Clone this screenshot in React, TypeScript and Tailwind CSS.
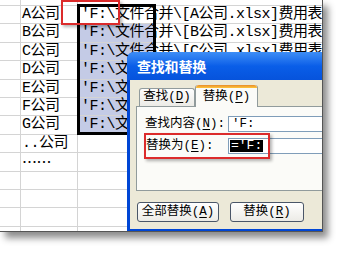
import React from 'react';

const mono = "font-['Liberation_Mono','Noto_Sans_CJK_SC',monospace]";
const cjk = "font-['Noto_Sans_CJK_SC',sans-serif]";

const path = (c: string) => `'F:\\文件合并\\[${c}公司.xlsx]费用表`;

const rows: { a?: string; b?: string; sel?: boolean; active?: boolean }[] = [
  { a: 'A公司', b: path('A'), sel: true, active: true },
  { a: 'B公司', b: path('B'), sel: true },
  { a: 'C公司', b: path('C'), sel: true },
  { a: 'D公司', b: path('D'), sel: true },
  { a: 'E公司', b: path('E'), sel: true },
  { a: 'F公司', b: path('F'), sel: true },
  { a: 'G公司', b: path('G'), sel: true },
  { a: '..公司' },
  { a: '……' },
  {},
  {},
  {},
  {},
];

const Key = ({ k }: { k: string }) => (
  <>
    (<span className="underline underline-offset-2">{k}</span>)
  </>
);

export default function App() {
  return (
    <div className="w-[343px] h-[253px] bg-white overflow-hidden">
      <div
        className={`relative w-[323px] h-[232px] overflow-hidden bg-white border-b border-r border-[#555] shadow-[5px_6px_7px_rgba(0,0,0,0.45)] ${mono} text-[15px] tracking-[-0.5px] text-black`}
      >
        {/* grid */}
        <div className="flex flex-col">
          <div className="flex h-[6px] border-b border-[#d4d4d4]">
            <div className="w-[21px] border-r border-[#d4d4d4]" />
            <div className="w-[57px] border-r border-[#d4d4d4]" />
            <div className="w-[77px]" />
          </div>
          {rows.map((r, i) => (
            <div key={i} className="flex h-[18.4px] shrink-0 border-b border-[#d4d4d4]">
              <div className="w-[21px] shrink-0 border-r border-[#d4d4d4]" />
              <div className="w-[57px] shrink-0 border-r border-[#d4d4d4] pl-[1px] leading-[18px] whitespace-nowrap">
                {r.a === '……' ? <span className={cjk}>{r.a}</span> : r.a}
              </div>
              <div
                className={`w-[77px] shrink-0 border-r border-[#d4d4d4] pl-[3px] leading-[18px] whitespace-nowrap overflow-visible ${
                  r.sel && !r.active ? 'bg-[#c4cbe6]' : ''
                }`}
              >
                {r.b}
              </div>
              <div className="flex-1" />
            </div>
          ))}
        </div>

        {/* selection outline */}
        <div className="absolute left-[77px] top-[4px] w-[79px] h-[131px] border-[3px] border-black" />

        {/* red mark over the first cell */}
        <div className="absolute left-[61px] top-[0px] w-[59px] h-[25px] border-2 border-[#dc2b2b] shadow-[2px_2px_3px_rgba(0,0,0,0.3)]" />

        {/* dialog */}
        <div className="absolute left-[127px] top-[52px] w-[240px] h-[180px] flex flex-col rounded-t-[7px] overflow-hidden bg-[#0046d5]">
          <div
            className={`h-[28px] shrink-0 flex items-center pl-[10px] bg-gradient-to-b from-[#3d8ef6] via-[#0a5ee8] to-[#0653dc] text-white font-bold text-[14px] tracking-[-0.2px] ${cjk}`}
          >
            查找和替换
          </div>
          <div className="flex-1 mx-[3px] mb-[3px] bg-[#ece9d8] flex flex-col text-[12.5px] tracking-normal">
            <div className="flex items-end h-[26px] pt-[4px] pl-[9px]">
              <div className="w-[56px] h-[18px] border border-b-0 border-[#919b9c] rounded-t-[3px] bg-gradient-to-b from-[#fefefe] to-[#ecebe6] flex items-center justify-center leading-none">
                查找<Key k="D" />
              </div>
              <div className="relative z-10 w-[63px] h-[22px] -mb-px border-x border-[#919b9c] rounded-t-[3px] bg-[#fbfbf8] flex flex-col">
                <div className="h-[3px] rounded-t-[3px] bg-gradient-to-b from-[#e68b2c] to-[#ffc73c]" />
                <div className="flex-1 flex items-center justify-center leading-none">
                  替换<Key k="P" />
                </div>
              </div>
            </div>
            <div className="ml-[6px] h-[85px] border border-[#919b9c] bg-[#fbfbf8] flex flex-col gap-[6px] pt-[9px]">
              <div className="flex items-center h-[16px]">
                <div className="w-[91px] pl-[8px] whitespace-nowrap">
                  查找内容<Key k="N" />:
                </div>
                <div className="flex-1 h-[16px] border border-[#7f9db9] bg-white pl-[3px] leading-[14px]">'F:</div>
              </div>
              <div className="flex items-center h-[16px]">
                <div className="w-[91px] pl-[9px] whitespace-nowrap">
                  替换为<Key k="E" />:
                </div>
                <div className="flex-1 h-[16px] border border-[#7f9db9] bg-white pl-[1px] flex items-center">
                  <span className="bg-black text-white text-[13px] leading-[12px] px-[1px]">='F:</span>
                </div>
              </div>
            </div>
            <div className="flex gap-[11px] mt-[11px] ml-[7px]">
              <div className="w-[82px] h-[20px] rounded-[3px] border border-[#4a5668] bg-gradient-to-b from-[#ffffff] to-[#ecebe6] flex items-center justify-center leading-none">
                全部替换<Key k="A" />
              </div>
              <div className="w-[74px] h-[20px] rounded-[3px] border border-[#4a5668] bg-gradient-to-b from-[#ffffff] to-[#ecebe6] flex items-center justify-center leading-none">
                替换<Key k="R" />
              </div>
            </div>
          </div>
        </div>

        {/* red mark over the replace field */}
        <div className="absolute left-[144px] top-[133px] w-[126px] h-[26px] border-2 border-[#dc2b2b] shadow-[2px_2px_3px_rgba(0,0,0,0.3)]" />
      </div>
    </div>
  );
}
